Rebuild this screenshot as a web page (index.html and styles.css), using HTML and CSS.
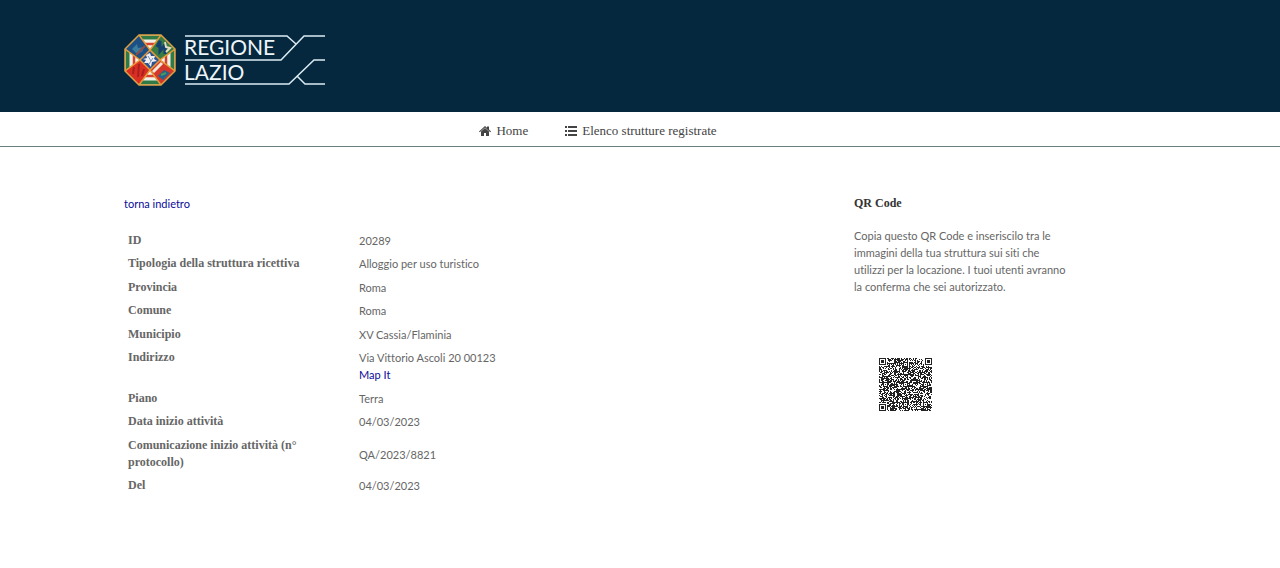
FILE: index.html
```html
<!DOCTYPE html>
<html lang="it">
<head>
  <meta charset="UTF-8">
  <meta name="viewport" content="width=device-width, initial-scale=1.0">
  <title>Regione Lazio - Strutture ricettive</title>
  <link rel="stylesheet" href="styles.css">
</head>
<body>
  <header class="site-header">
    <div class="container">
      <a class="logo" href="#" aria-label="Regione Lazio">
        <svg width="202" height="52" viewBox="0 0 202 52">
          <defs>
            <clipPath id="octagon"><path d="M15 1H37L51 15V37L37 51H15L1 37V15Z"/></clipPath>
          </defs>
          <!-- Stemma -->
          <g clip-path="url(#octagon)">
            <rect width="52" height="52" fill="#f1f0e6"/>
            <path d="M3.500 12V40M12 3.500H40M12 48.500H40M48.500 12V40" stroke="#2f7a45" stroke-width="4"/>
            <path d="M17 10H35M17 42H35M10 17V35M42 17V35" stroke="#d5402f" stroke-width="2.500"/>
            <path d="M15 1L26 16L16 26L1 15L1 1Z" fill="#1c4f83"/>
            <path d="M8 15L13 10L14 14L20 13L18 18L12 19Z" fill="#3c7c9c"/>
            <path d="M12 21L21 12" stroke="#8b4b46" stroke-width="2"/>
            <path d="M37 1H51V15L36 26L26 16Z" fill="#397c43"/>
            <path d="M33 13L36 7V17L41 11V20" stroke="#173f70" stroke-width="3" fill="none"/>
            <path d="M41 8L42 13L46 14L42 18" stroke="#e6dfc0" stroke-width="2" fill="none"/>
            <path d="M16 26L26 36L15 51H1V37Z" fill="#d92e22"/>
            <path d="M10 33L9 40M15 30L14 43M20 35L18 42" stroke="#a82020" stroke-width="2"/>
            <path d="M36 26L51 37V51H37L26 36Z" fill="#d4382a"/>
            <path d="M29 38L38 29" stroke="#f3e7d8" stroke-width="3"/>
            <path d="M34 42L40 36L46 39L39 46Z" fill="#24638b"/>
            <path d="M37 41L42 39" stroke="#4c9a56" stroke-width="2"/>
            <path d="M26 16L36 26L26 36L16 26Z" fill="#2a5293"/>
            <path d="M22 21L26 19L27 22L31 22L30 25L33 27L28 28L27 33L24 29L20 29L22 26L19 25L23 24Z" fill="#f2efef"/>
            <path d="M24 22L27 27M29 24L25 30" stroke="#7690be"/>
            <path d="M15 1L26 16L37 1M1 15L16 26L1 37M15 51L26 36L37 51M51 15L36 26L51 37M26 16L36 26L26 36L16 26Z" fill="none" stroke="#e79b38" stroke-width="1.500"/>
          </g>
          <path d="M15 1H37L51 15V37L37 51H15L1 37V15Z" fill="none" stroke="#dda044" stroke-width="1.500"/>
          <!-- Scritta e linee -->
          <g fill="none" stroke="#dcecf2" stroke-width="1.500">
            <path d="M61 2H163L172 10"/>
            <path d="M61 26H157L180 2H201"/>
            <path d="M61 50H165L190 26H201"/>
            <path d="M173 42L181 50H201"/>
          </g>
          <text class="logo-text" x="60" y="21">REGIONE</text>
          <text class="logo-text" x="60" y="46">LAZIO</text>
        </svg>
      </a>
    </div>
  </header>

  <nav class="main-nav">
    <ul>
      <li>
        <a href="#">
          <svg width="12" height="12" viewBox="0 0 12 12" fill="currentColor"><path d="M6 3L10 6.500V11H7V8H5V11H2V6.500Z"/><path d="M0 6.500L6 1L8 2.800V1.500H10V4.600L12 6.500L11.300 7.300L6 2.500L.7 7.300Z"/></svg>
          Home
        </a>
      </li>
      <li>
        <a href="#">
          <svg width="12" height="12" viewBox="0 0 12 12" fill="currentColor"><path d="M0 1H2V3H0ZM3 1H12V3H3ZM0 5H2V7H0ZM3 5H12V7H3ZM0 9H2V11H0ZM3 9H12V11H3Z"/></svg>
          Elenco strutture registrate
        </a>
      </li>
    </ul>
  </nav>

  <div class="container content">
    <main>
      <a href="#">torna indietro</a>
      <table class="details">
        <tr><th scope="row">ID</th><td>20289</td></tr>
        <tr><th scope="row">Tipologia della struttura ricettiva</th><td>Alloggio per uso turistico</td></tr>
        <tr><th scope="row">Provincia</th><td>Roma</td></tr>
        <tr><th scope="row">Comune</th><td>Roma</td></tr>
        <tr><th scope="row">Municipio</th><td>XV Cassia/Flaminia</td></tr>
        <tr><th scope="row">Indirizzo</th><td>Via Vittorio Ascoli 20 00123<br><a href="#">Map It</a></td></tr>
        <tr><th scope="row">Piano</th><td>Terra</td></tr>
        <tr><th scope="row">Data inizio attività</th><td>04/03/2023</td></tr>
        <tr><th scope="row">Comunicazione inizio attività (n° protocollo)</th><td>QA/2023/8821</td></tr>
        <tr><th scope="row">Del</th><td>04/03/2023</td></tr>
      </table>
    </main>

    <aside class="sidebar">
      <h4>QR Code</h4>
      <p>Copia questo QR Code e inseriscilo tra le immagini della tua struttura sui siti che utilizzi per la locazione. I tuoi utenti avranno la conferma che sei autorizzato.</p>
      <svg class="qr" id="qr" width="53" height="53" viewBox="0 0 53 53" role="img" aria-label="QR Code"></svg>
    </aside>
  </div>

  <script src="qr.js"></script>
</body>
</html>
```
FILE: styles.css
```css
* {
  box-sizing: border-box;
}

body {
  margin: 0;
  background: #fff;
  color: #666;
  font-family: Lato, "Open Sans", sans-serif;
  font-size: 11px;
  line-height: 17px;
  font-variant-ligatures: none;
}

a {
  color: #0a0a9c;
  text-decoration: none;
}

.container {
  max-width: 1080px;
  margin: 0 auto;
  padding: 0 24px;
}

/* Header */
.site-header {
  background: #05283f;
  padding: 34px 0 26px;
}

.logo,
.logo svg {
  display: block;
}

.logo-text {
  font-family: Lato, sans-serif;
  font-size: 21px;
  fill: #eef6fa;
}

/* Menu */
.main-nav {
  border-bottom: 1px solid #6b7f80;
}

.main-nav ul {
  display: flex;
  justify-content: center;
  gap: 37px;
  margin: 0;
  padding: 10px 84px 7px 0;
  list-style: none;
}

.main-nav a {
  display: flex;
  align-items: center;
  gap: 5px;
  color: #444;
  font-family: "Liberation Serif", serif;
  font-size: 13px;
}

/* Contenuto */
.content {
  display: flex;
  justify-content: space-between;
  padding-top: 48px;
}

main {
  flex: 0 1 700px;
}

.details {
  width: 100%;
  margin-top: 17px;
  border-collapse: collapse;
}

.details th,
.details td {
  padding: 3px 4px;
  text-align: left;
}

.details tr:nth-child(even) > * {
  padding-bottom: 4px;
}

.details th {
  width: 33%;
  padding-right: 36px;
  font-family: "Liberation Serif", serif;
  font-size: 12px;
  vertical-align: top;
}

.sidebar {
  flex: 0 0 302px;
  padding-right: 84px;
}

.sidebar h4 {
  margin: 0 0 15px;
  color: #333;
  font-family: "Liberation Serif", serif;
  font-size: 12px;
}

.sidebar p {
  margin: 0 0 63px;
}

.qr {
  display: block;
  margin-left: 25px;
  fill: #222;
  shape-rendering: crispEdges;
}
```
FILE: qr.js
```js
const size = 53;
const qr = document.getElementById('qr');
let seed = 20289;
let path = '';

function random() {
  seed = (seed * 1103515245 + 12345) % 2147483648;
  return seed / 2147483648;
}

// rings around a centre: finder patterns use radius 4, alignment ones radius 2
function ring(x, y, cx, cy) {
  return Math.max(Math.abs(x - cx), Math.abs(y - cy));
}

function isDark(x, y) {
  const noise = random() > 0.42;
  for (const [cx, cy] of [[3, 3], [49, 3], [3, 49]]) {
    const r = ring(x, y, cx, cy);
    if (r <= 4) return r !== 2 && r !== 4;
  }
  for (const [cx, cy] of [[26, 6], [6, 26], [26, 26], [46, 26], [26, 46], [46, 46]]) {
    const r = ring(x, y, cx, cy);
    if (r <= 2) return r !== 1;
  }
  if (x === 6 || y === 6) return (x + y) % 2 === 0;
  return noise;
}

for (let y = 0; y < size; y++) {
  for (let x = 0; x < size; x++) {
    if (isDark(x, y)) path += `M${x} ${y}h1v1h-1z`;
  }
}

qr.innerHTML = `<path d="${path}"/>`;
```
